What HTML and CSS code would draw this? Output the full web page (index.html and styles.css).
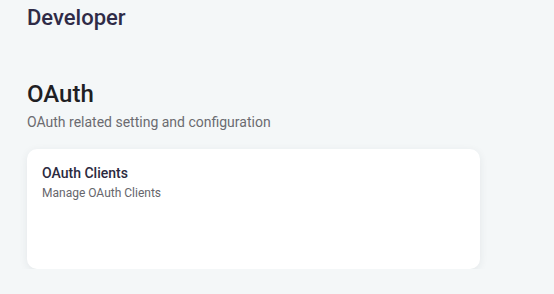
FILE: index.html
```html
<!DOCTYPE html>
<html>
	<head>
		<title>Developer</title>
		<meta name="viewport" content="width=device-width, initial-scale=1">
		<link rel="stylesheet" href="styles.css">
	</head>
	<body>
	<div id="page">
		<h1 class="page-title">Developer</h1>
		<div class="section">
			<h2 class="section-title">OAuth</h2>
			<p class="section-desc">OAuth related setting and configuration</p>
			<div class="card">
				<div class="card-title">OAuth Clients</div>
				<div class="card-desc">Manage OAuth Clients</div>
			</div>
		</div>
	</div>
	</body>
</html>
```

FILE: styles.css
```css
body{
	margin:0;
	background-color:#f4f7f8;
	font-family: Roboto, "Noto Sans", sans-serif;
}
#page{
	padding:5px 27px 0;
}
.page-title{
	margin:0;
	font-size:22px;
	line-height:26px;
	font-weight:500;
	color:#2f2b47;
}
.section{
	margin-top:49px;
}
.section-title{
	margin:0;
	font-size:24px;
	line-height:28px;
	font-weight:500;
	color:#1f1f24;
}
.section-desc{
	margin:4px 0 0;
	font-size:14px;
	line-height:20px;
	color:#6b6b70;
}
.card{
	margin-top:17px;
	width:423px;
	height:92px;
	padding:14px 15px;
	background:#ffffff;
	border-radius:10px;
	box-shadow:0 2px 8px rgba(40,50,60,0.08);
}
.card-title{
	font-size:14px;
	line-height:20px;
	font-weight:500;
	color:#2b2a40;
}
.card-desc{
	margin-top:2px;
	font-size:12px;
	line-height:16px;
	color:#66666c;
}
```
